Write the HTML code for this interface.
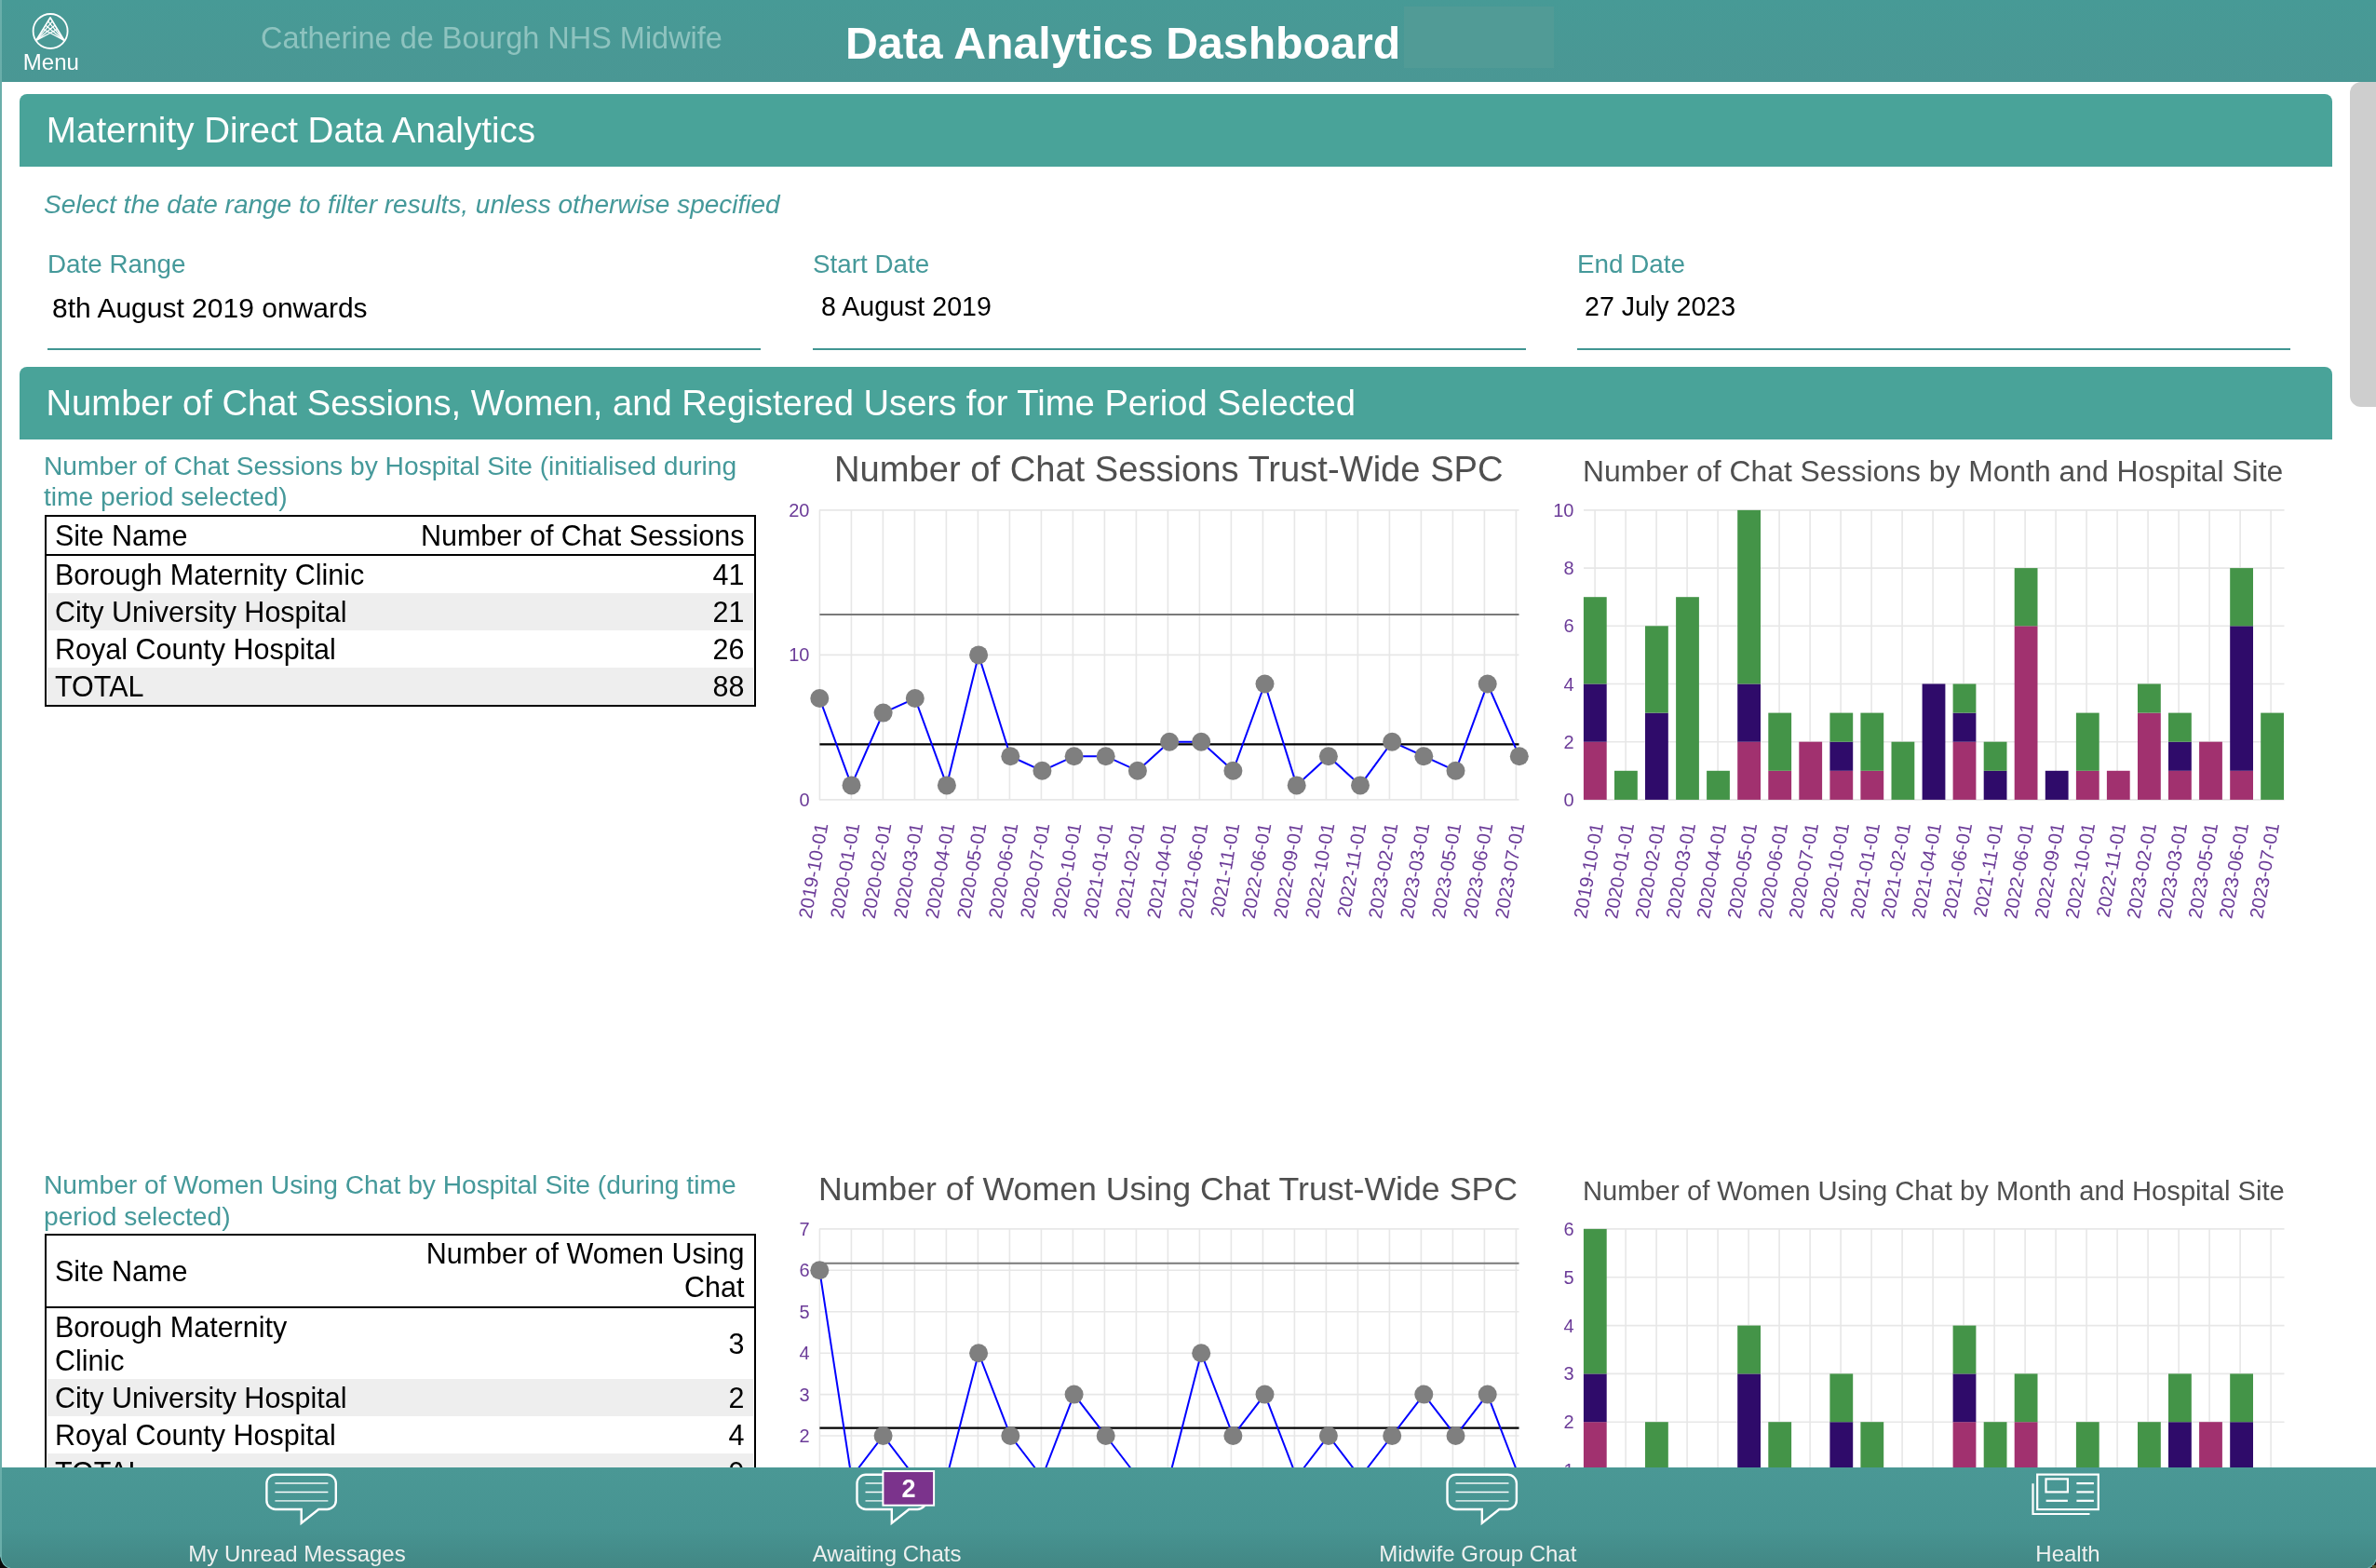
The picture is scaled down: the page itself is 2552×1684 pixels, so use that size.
<!DOCTYPE html>
<html><head><meta charset="utf-8"><title>Data Analytics Dashboard</title>
<style>
html,body{margin:0;padding:0;}
body{width:2552px;height:1684px;overflow:hidden;position:relative;background:#fff;font-family:"Liberation Sans", sans-serif;}
.abs{position:absolute;}
</style></head><body>
<div style="position:absolute;left:0;top:0;width:2552px;height:1684px;overflow:hidden;will-change:transform;">
<div class="abs" style="left:0;top:0;width:2px;height:1684px;background:#6aaeaa;z-index:50"></div>
<div class="abs" style="left:0;top:0;width:2552px;height:88px;background:linear-gradient(#479a96,#4a9794);"></div>
<div class="abs" style="left:1508px;top:7px;width:161px;height:66px;background:#519b96;"></div>
<div style="position:absolute;left:280.0px;top:24.8px;font-size:32.45px;line-height:32.45px;color:#8ec3bf;font-weight:normal;font-style:normal;white-space:nowrap;">Catherine de Bourgh NHS Midwife</div>
<div style="position:absolute;left:908.0px;top:21.8px;font-size:48.25px;line-height:48.25px;color:#fff;font-weight:bold;font-style:normal;white-space:nowrap;">Data Analytics Dashboard</div>
<div style="position:absolute;left:24.8px;top:54.9px;font-size:24px;line-height:24px;color:#fff;font-weight:normal;font-style:normal;white-space:nowrap;">Menu</div>
<svg class="abs" style="left:30px;top:10px" width="50" height="50" viewBox="30 10 50 50"><circle cx="54.1" cy="33.5" r="18.5" fill="none" stroke="#fff" stroke-width="1.8"/><line x1="38.9" y1="43.4" x2="56.61" y2="22.53" stroke="#fff" stroke-width="1.25"/><line x1="68.9" y1="43.4" x2="51.39" y2="22.53" stroke="#fff" stroke-width="1.25"/><line x1="38.9" y1="43.4" x2="59.22" y2="26.96" stroke="#fff" stroke-width="1.25"/><line x1="68.9" y1="43.4" x2="48.78" y2="26.96" stroke="#fff" stroke-width="1.25"/><line x1="38.9" y1="43.4" x2="61.76" y2="31.28" stroke="#fff" stroke-width="1.25"/><line x1="68.9" y1="43.4" x2="46.24" y2="31.28" stroke="#fff" stroke-width="1.25"/><polyline points="38.9,43.4 54,18.9 68.9,43.4" fill="none" stroke="#fff" stroke-width="1.8" stroke-linejoin="round"/></svg>
<div class="abs" style="left:2524px;top:88px;width:40px;height:349px;background:#cecece;border-radius:12px;"></div>
<div class="abs" style="left:21px;top:101px;width:2484px;height:78px;background:#49a399;border-radius:8px 8px 0 0;"></div>
<div style="position:absolute;left:49.8px;top:120.9px;font-size:38.6px;line-height:38.6px;color:#fff;font-weight:normal;font-style:normal;white-space:nowrap;">Maternity Direct Data Analytics</div>
<div style="position:absolute;left:47.0px;top:206.3px;font-size:28px;line-height:28px;color:#45999a;font-weight:normal;font-style:italic;white-space:nowrap;">Select the date range to filter results, unless otherwise specified</div>
<div style="position:absolute;left:51.0px;top:269.9px;font-size:27.8px;line-height:27.8px;color:#45999a;font-weight:normal;font-style:normal;white-space:nowrap;">Date Range</div>
<div style="position:absolute;left:56.0px;top:315.7px;font-size:30px;line-height:30px;color:#000;font-weight:normal;font-style:normal;white-space:nowrap;">8th August 2019 onwards</div>
<div class="abs" style="left:51px;top:374px;width:766px;height:2px;background:#419592;"></div>
<div style="position:absolute;left:873.0px;top:269.9px;font-size:27.8px;line-height:27.8px;color:#45999a;font-weight:normal;font-style:normal;white-space:nowrap;">Start Date</div>
<div style="position:absolute;left:882.0px;top:314.8px;font-size:28.6px;line-height:28.6px;color:#000;font-weight:normal;font-style:normal;white-space:nowrap;">8 August 2019</div>
<div class="abs" style="left:873px;top:374px;width:766px;height:2px;background:#419592;"></div>
<div style="position:absolute;left:1694.0px;top:269.9px;font-size:27.8px;line-height:27.8px;color:#45999a;font-weight:normal;font-style:normal;white-space:nowrap;">End Date</div>
<div style="position:absolute;left:1702.0px;top:314.8px;font-size:28.6px;line-height:28.6px;color:#000;font-weight:normal;font-style:normal;white-space:nowrap;">27 July 2023</div>
<div class="abs" style="left:1694px;top:374px;width:766px;height:2px;background:#419592;"></div>
<div class="abs" style="left:21px;top:394px;width:2484px;height:78px;background:#49a399;border-radius:8px 8px 0 0;"></div>
<div style="position:absolute;left:49.5px;top:413.9px;font-size:38.2px;line-height:38.2px;color:#fff;font-weight:normal;font-style:normal;white-space:nowrap;">Number of Chat Sessions, Women, and Registered Users for Time Period Selected</div>
<div style="position:absolute;left:47.0px;top:485.7px;font-size:28.2px;line-height:28.2px;color:#45999a;font-weight:normal;font-style:normal;white-space:nowrap;">Number of Chat Sessions by Hospital Site (initialised during</div>
<div style="position:absolute;left:47.0px;top:519.1px;font-size:28.2px;line-height:28.2px;color:#45999a;font-weight:normal;font-style:normal;white-space:nowrap;">time period selected)</div>
<div class="abs" style="left:48px;top:553px;width:760px;height:202px;border:2px solid #000;"></div>
<div class="abs" style="left:48px;top:595px;width:764px;height:2px;background:#000;"></div>
<div style="position:absolute;left:59.0px;top:560.0px;font-size:30.5px;line-height:30.5px;color:#000;font-weight:normal;font-style:normal;white-space:nowrap;">Site Name</div>
<div style="position:absolute;right:1752.5px;text-align:right;top:560.0px;font-size:30.5px;line-height:30.5px;color:#000;font-weight:normal;font-style:normal;white-space:nowrap;">Number of Chat Sessions</div>
<div style="position:absolute;left:59.0px;top:602.1px;font-size:30.5px;line-height:30.5px;color:#000;font-weight:normal;font-style:normal;white-space:nowrap;">Borough Maternity Clinic</div>
<div style="position:absolute;right:1752.5px;text-align:right;top:602.1px;font-size:30.5px;line-height:30.5px;color:#000;font-weight:normal;font-style:normal;white-space:nowrap;">41</div>
<div class="abs" style="left:51px;top:637px;width:758px;height:40px;background:#eeeeee;"></div>
<div style="position:absolute;left:59.0px;top:642.1px;font-size:30.5px;line-height:30.5px;color:#000;font-weight:normal;font-style:normal;white-space:nowrap;">City University Hospital</div>
<div style="position:absolute;right:1752.5px;text-align:right;top:642.1px;font-size:30.5px;line-height:30.5px;color:#000;font-weight:normal;font-style:normal;white-space:nowrap;">21</div>
<div style="position:absolute;left:59.0px;top:682.1px;font-size:30.5px;line-height:30.5px;color:#000;font-weight:normal;font-style:normal;white-space:nowrap;">Royal County Hospital</div>
<div style="position:absolute;right:1752.5px;text-align:right;top:682.1px;font-size:30.5px;line-height:30.5px;color:#000;font-weight:normal;font-style:normal;white-space:nowrap;">26</div>
<div class="abs" style="left:51px;top:717px;width:758px;height:40px;background:#eeeeee;"></div>
<div style="position:absolute;left:59.0px;top:722.1px;font-size:30.5px;line-height:30.5px;color:#000;font-weight:normal;font-style:normal;white-space:nowrap;">TOTAL</div>
<div style="position:absolute;right:1752.5px;text-align:right;top:722.1px;font-size:30.5px;line-height:30.5px;color:#000;font-weight:normal;font-style:normal;white-space:nowrap;">88</div>
<div style="position:absolute;left:47.0px;top:1258.3px;font-size:28.2px;line-height:28.2px;color:#45999a;font-weight:normal;font-style:normal;white-space:nowrap;">Number of Women Using Chat by Hospital Site (during time</div>
<div style="position:absolute;left:47.0px;top:1291.9px;font-size:28.2px;line-height:28.2px;color:#45999a;font-weight:normal;font-style:normal;white-space:nowrap;">period selected)</div>
<div class="abs" style="left:48px;top:1325px;width:760px;height:274px;border:2px solid #000;"></div>
<div class="abs" style="left:48px;top:1403px;width:764px;height:2px;background:#000;"></div>
<div style="position:absolute;left:59.0px;top:1350.3px;font-size:30.5px;line-height:30.5px;color:#000;font-weight:normal;font-style:normal;white-space:nowrap;">Site Name</div>
<div style="position:absolute;right:1752.5px;text-align:right;top:1331.3px;font-size:30.5px;line-height:30.5px;color:#000;font-weight:normal;font-style:normal;white-space:nowrap;">Number of Women Using</div>
<div style="position:absolute;right:1752.5px;text-align:right;top:1367.3px;font-size:30.5px;line-height:30.5px;color:#000;font-weight:normal;font-style:normal;white-space:nowrap;">Chat</div>
<div style="position:absolute;left:59.0px;top:1410.1px;font-size:30.5px;line-height:30.5px;color:#000;font-weight:normal;font-style:normal;white-space:nowrap;">Borough Maternity</div>
<div style="position:absolute;left:59.0px;top:1446.1px;font-size:30.5px;line-height:30.5px;color:#000;font-weight:normal;font-style:normal;white-space:nowrap;">Clinic</div>
<div style="position:absolute;right:1752.5px;text-align:right;top:1428.1px;font-size:30.5px;line-height:30.5px;color:#000;font-weight:normal;font-style:normal;white-space:nowrap;">3</div>
<div class="abs" style="left:51px;top:1481px;width:758px;height:40px;background:#eeeeee;"></div>
<div style="position:absolute;left:59.0px;top:1486.1px;font-size:30.5px;line-height:30.5px;color:#000;font-weight:normal;font-style:normal;white-space:nowrap;">City University Hospital</div>
<div style="position:absolute;right:1752.5px;text-align:right;top:1486.1px;font-size:30.5px;line-height:30.5px;color:#000;font-weight:normal;font-style:normal;white-space:nowrap;">2</div>
<div style="position:absolute;left:59.0px;top:1526.1px;font-size:30.5px;line-height:30.5px;color:#000;font-weight:normal;font-style:normal;white-space:nowrap;">Royal County Hospital</div>
<div style="position:absolute;right:1752.5px;text-align:right;top:1526.1px;font-size:30.5px;line-height:30.5px;color:#000;font-weight:normal;font-style:normal;white-space:nowrap;">4</div>
<div class="abs" style="left:51px;top:1561px;width:758px;height:40px;background:#eeeeee;"></div>
<div style="position:absolute;left:59.0px;top:1566.1px;font-size:30.5px;line-height:30.5px;color:#000;font-weight:normal;font-style:normal;white-space:nowrap;">TOTAL</div>
<div style="position:absolute;right:1752.5px;text-align:right;top:1566.1px;font-size:30.5px;line-height:30.5px;color:#000;font-weight:normal;font-style:normal;white-space:nowrap;">9</div>
<svg class="abs" style="left:0;top:0;z-index:1" width="2552" height="1684" viewBox="0 0 2552 1684" font-family='"Liberation Sans", sans-serif'><line x1="880" y1="858.9" x2="1631.5" y2="858.9" stroke="#e7e7e7" stroke-width="1.6"/><line x1="880" y1="703.4" x2="1631.5" y2="703.4" stroke="#e7e7e7" stroke-width="1.6"/><line x1="880" y1="547.9" x2="1631.5" y2="547.9" stroke="#e7e7e7" stroke-width="1.6"/><line x1="880.4" y1="547.9" x2="880.4" y2="858.9" stroke="#e7e7e7" stroke-width="1.6"/><line x1="914.4" y1="547.9" x2="914.4" y2="858.9" stroke="#e7e7e7" stroke-width="1.6"/><line x1="948.4" y1="547.9" x2="948.4" y2="858.9" stroke="#e7e7e7" stroke-width="1.6"/><line x1="982.4" y1="547.9" x2="982.4" y2="858.9" stroke="#e7e7e7" stroke-width="1.6"/><line x1="1016.4" y1="547.9" x2="1016.4" y2="858.9" stroke="#e7e7e7" stroke-width="1.6"/><line x1="1050.4" y1="547.9" x2="1050.4" y2="858.9" stroke="#e7e7e7" stroke-width="1.6"/><line x1="1084.4" y1="547.9" x2="1084.4" y2="858.9" stroke="#e7e7e7" stroke-width="1.6"/><line x1="1118.4" y1="547.9" x2="1118.4" y2="858.9" stroke="#e7e7e7" stroke-width="1.6"/><line x1="1152.4" y1="547.9" x2="1152.4" y2="858.9" stroke="#e7e7e7" stroke-width="1.6"/><line x1="1186.4" y1="547.9" x2="1186.4" y2="858.9" stroke="#e7e7e7" stroke-width="1.6"/><line x1="1220.4" y1="547.9" x2="1220.4" y2="858.9" stroke="#e7e7e7" stroke-width="1.6"/><line x1="1254.4" y1="547.9" x2="1254.4" y2="858.9" stroke="#e7e7e7" stroke-width="1.6"/><line x1="1288.4" y1="547.9" x2="1288.4" y2="858.9" stroke="#e7e7e7" stroke-width="1.6"/><line x1="1322.4" y1="547.9" x2="1322.4" y2="858.9" stroke="#e7e7e7" stroke-width="1.6"/><line x1="1356.4" y1="547.9" x2="1356.4" y2="858.9" stroke="#e7e7e7" stroke-width="1.6"/><line x1="1390.4" y1="547.9" x2="1390.4" y2="858.9" stroke="#e7e7e7" stroke-width="1.6"/><line x1="1424.4" y1="547.9" x2="1424.4" y2="858.9" stroke="#e7e7e7" stroke-width="1.6"/><line x1="1458.4" y1="547.9" x2="1458.4" y2="858.9" stroke="#e7e7e7" stroke-width="1.6"/><line x1="1492.4" y1="547.9" x2="1492.4" y2="858.9" stroke="#e7e7e7" stroke-width="1.6"/><line x1="1526.4" y1="547.9" x2="1526.4" y2="858.9" stroke="#e7e7e7" stroke-width="1.6"/><line x1="1560.4" y1="547.9" x2="1560.4" y2="858.9" stroke="#e7e7e7" stroke-width="1.6"/><line x1="1594.4" y1="547.9" x2="1594.4" y2="858.9" stroke="#e7e7e7" stroke-width="1.6"/><line x1="1628.4" y1="547.9" x2="1628.4" y2="858.9" stroke="#e7e7e7" stroke-width="1.6"/><line x1="880.4" y1="660.0" x2="1631.5" y2="660.0" stroke="#7a7a7a" stroke-width="2"/><line x1="880.4" y1="799.4" x2="1631.5" y2="799.4" stroke="#000" stroke-width="2.2"/><polyline points="880.3,750.0 914.5,843.4 948.6,765.6 982.8,750.0 1016.9,843.4 1051.1,703.4 1085.3,812.2 1119.4,827.8 1153.6,812.2 1187.7,812.2 1221.9,827.8 1256.1,796.7 1290.2,796.7 1324.4,827.8 1358.5,734.5 1392.7,843.4 1426.9,812.2 1461.0,843.4 1495.2,796.7 1529.3,812.2 1563.5,827.8 1597.7,734.5 1631.8,812.2" fill="none" stroke="#0000ff" stroke-width="2"/><circle cx="880.3" cy="750.0" r="10" fill="#7f7f7f"/><circle cx="914.5" cy="843.4" r="10" fill="#7f7f7f"/><circle cx="948.6" cy="765.6" r="10" fill="#7f7f7f"/><circle cx="982.8" cy="750.0" r="10" fill="#7f7f7f"/><circle cx="1016.9" cy="843.4" r="10" fill="#7f7f7f"/><circle cx="1051.1" cy="703.4" r="10" fill="#7f7f7f"/><circle cx="1085.3" cy="812.2" r="10" fill="#7f7f7f"/><circle cx="1119.4" cy="827.8" r="10" fill="#7f7f7f"/><circle cx="1153.6" cy="812.2" r="10" fill="#7f7f7f"/><circle cx="1187.7" cy="812.2" r="10" fill="#7f7f7f"/><circle cx="1221.9" cy="827.8" r="10" fill="#7f7f7f"/><circle cx="1256.1" cy="796.7" r="10" fill="#7f7f7f"/><circle cx="1290.2" cy="796.7" r="10" fill="#7f7f7f"/><circle cx="1324.4" cy="827.8" r="10" fill="#7f7f7f"/><circle cx="1358.5" cy="734.5" r="10" fill="#7f7f7f"/><circle cx="1392.7" cy="843.4" r="10" fill="#7f7f7f"/><circle cx="1426.9" cy="812.2" r="10" fill="#7f7f7f"/><circle cx="1461.0" cy="843.4" r="10" fill="#7f7f7f"/><circle cx="1495.2" cy="796.7" r="10" fill="#7f7f7f"/><circle cx="1529.3" cy="812.2" r="10" fill="#7f7f7f"/><circle cx="1563.5" cy="827.8" r="10" fill="#7f7f7f"/><circle cx="1597.7" cy="734.5" r="10" fill="#7f7f7f"/><circle cx="1631.8" cy="812.2" r="10" fill="#7f7f7f"/><text x="869.5" y="865.9" text-anchor="end" font-size="20" fill="#6b3b98">0</text><text x="869.5" y="710.4" text-anchor="end" font-size="20" fill="#6b3b98">10</text><text x="869.5" y="554.9" text-anchor="end" font-size="20" fill="#6b3b98">20</text><text transform="translate(889.4,885.4) rotate(-80)" text-anchor="end" font-size="20.3" fill="#6b3b98">2019-10-01</text><text transform="translate(923.4,885.4) rotate(-80)" text-anchor="end" font-size="20.3" fill="#6b3b98">2020-01-01</text><text transform="translate(957.4,885.4) rotate(-80)" text-anchor="end" font-size="20.3" fill="#6b3b98">2020-02-01</text><text transform="translate(991.4,885.4) rotate(-80)" text-anchor="end" font-size="20.3" fill="#6b3b98">2020-03-01</text><text transform="translate(1025.4,885.4) rotate(-80)" text-anchor="end" font-size="20.3" fill="#6b3b98">2020-04-01</text><text transform="translate(1059.4,885.4) rotate(-80)" text-anchor="end" font-size="20.3" fill="#6b3b98">2020-05-01</text><text transform="translate(1093.4,885.4) rotate(-80)" text-anchor="end" font-size="20.3" fill="#6b3b98">2020-06-01</text><text transform="translate(1127.4,885.4) rotate(-80)" text-anchor="end" font-size="20.3" fill="#6b3b98">2020-07-01</text><text transform="translate(1161.4,885.4) rotate(-80)" text-anchor="end" font-size="20.3" fill="#6b3b98">2020-10-01</text><text transform="translate(1195.4,885.4) rotate(-80)" text-anchor="end" font-size="20.3" fill="#6b3b98">2021-01-01</text><text transform="translate(1229.4,885.4) rotate(-80)" text-anchor="end" font-size="20.3" fill="#6b3b98">2021-02-01</text><text transform="translate(1263.4,885.4) rotate(-80)" text-anchor="end" font-size="20.3" fill="#6b3b98">2021-04-01</text><text transform="translate(1297.4,885.4) rotate(-80)" text-anchor="end" font-size="20.3" fill="#6b3b98">2021-06-01</text><text transform="translate(1331.4,885.4) rotate(-80)" text-anchor="end" font-size="20.3" fill="#6b3b98">2021-11-01</text><text transform="translate(1365.4,885.4) rotate(-80)" text-anchor="end" font-size="20.3" fill="#6b3b98">2022-06-01</text><text transform="translate(1399.4,885.4) rotate(-80)" text-anchor="end" font-size="20.3" fill="#6b3b98">2022-09-01</text><text transform="translate(1433.4,885.4) rotate(-80)" text-anchor="end" font-size="20.3" fill="#6b3b98">2022-10-01</text><text transform="translate(1467.4,885.4) rotate(-80)" text-anchor="end" font-size="20.3" fill="#6b3b98">2022-11-01</text><text transform="translate(1501.4,885.4) rotate(-80)" text-anchor="end" font-size="20.3" fill="#6b3b98">2023-02-01</text><text transform="translate(1535.4,885.4) rotate(-80)" text-anchor="end" font-size="20.3" fill="#6b3b98">2023-03-01</text><text transform="translate(1569.4,885.4) rotate(-80)" text-anchor="end" font-size="20.3" fill="#6b3b98">2023-05-01</text><text transform="translate(1603.4,885.4) rotate(-80)" text-anchor="end" font-size="20.3" fill="#6b3b98">2023-06-01</text><text transform="translate(1637.4,885.4) rotate(-80)" text-anchor="end" font-size="20.3" fill="#6b3b98">2023-07-01</text><text x="896" y="516.6" font-size="38.15" fill="#4f4f4f">Number of Chat Sessions Trust-Wide SPC</text></svg>
<svg class="abs" style="left:0;top:0;z-index:1" width="2552" height="1684" viewBox="0 0 2552 1684" font-family='"Liberation Sans", sans-serif'><line x1="1701" y1="858.9" x2="2453.5" y2="858.9" stroke="#e7e7e7" stroke-width="1.6"/><line x1="1701" y1="796.7" x2="2453.5" y2="796.7" stroke="#e7e7e7" stroke-width="1.6"/><line x1="1701" y1="734.5" x2="2453.5" y2="734.5" stroke="#e7e7e7" stroke-width="1.6"/><line x1="1701" y1="672.3" x2="2453.5" y2="672.3" stroke="#e7e7e7" stroke-width="1.6"/><line x1="1701" y1="610.1" x2="2453.5" y2="610.1" stroke="#e7e7e7" stroke-width="1.6"/><line x1="1701" y1="547.9" x2="2453.5" y2="547.9" stroke="#e7e7e7" stroke-width="1.6"/><line x1="1713.1" y1="547.9" x2="1713.1" y2="858.9" stroke="#e7e7e7" stroke-width="1.6"/><line x1="1746.1" y1="547.9" x2="1746.1" y2="858.9" stroke="#e7e7e7" stroke-width="1.6"/><line x1="1779.1" y1="547.9" x2="1779.1" y2="858.9" stroke="#e7e7e7" stroke-width="1.6"/><line x1="1812.1" y1="547.9" x2="1812.1" y2="858.9" stroke="#e7e7e7" stroke-width="1.6"/><line x1="1845.1" y1="547.9" x2="1845.1" y2="858.9" stroke="#e7e7e7" stroke-width="1.6"/><line x1="1878.1" y1="547.9" x2="1878.1" y2="858.9" stroke="#e7e7e7" stroke-width="1.6"/><line x1="1911.1" y1="547.9" x2="1911.1" y2="858.9" stroke="#e7e7e7" stroke-width="1.6"/><line x1="1944.1" y1="547.9" x2="1944.1" y2="858.9" stroke="#e7e7e7" stroke-width="1.6"/><line x1="1977.1" y1="547.9" x2="1977.1" y2="858.9" stroke="#e7e7e7" stroke-width="1.6"/><line x1="2010.1" y1="547.9" x2="2010.1" y2="858.9" stroke="#e7e7e7" stroke-width="1.6"/><line x1="2043.1" y1="547.9" x2="2043.1" y2="858.9" stroke="#e7e7e7" stroke-width="1.6"/><line x1="2076.1" y1="547.9" x2="2076.1" y2="858.9" stroke="#e7e7e7" stroke-width="1.6"/><line x1="2109.1" y1="547.9" x2="2109.1" y2="858.9" stroke="#e7e7e7" stroke-width="1.6"/><line x1="2142.1" y1="547.9" x2="2142.1" y2="858.9" stroke="#e7e7e7" stroke-width="1.6"/><line x1="2175.1" y1="547.9" x2="2175.1" y2="858.9" stroke="#e7e7e7" stroke-width="1.6"/><line x1="2208.1" y1="547.9" x2="2208.1" y2="858.9" stroke="#e7e7e7" stroke-width="1.6"/><line x1="2241.1" y1="547.9" x2="2241.1" y2="858.9" stroke="#e7e7e7" stroke-width="1.6"/><line x1="2274.1" y1="547.9" x2="2274.1" y2="858.9" stroke="#e7e7e7" stroke-width="1.6"/><line x1="2307.1" y1="547.9" x2="2307.1" y2="858.9" stroke="#e7e7e7" stroke-width="1.6"/><line x1="2340.1" y1="547.9" x2="2340.1" y2="858.9" stroke="#e7e7e7" stroke-width="1.6"/><line x1="2373.1" y1="547.9" x2="2373.1" y2="858.9" stroke="#e7e7e7" stroke-width="1.6"/><line x1="2406.1" y1="547.9" x2="2406.1" y2="858.9" stroke="#e7e7e7" stroke-width="1.6"/><line x1="2439.1" y1="547.9" x2="2439.1" y2="858.9" stroke="#e7e7e7" stroke-width="1.6"/><rect x="1700.9" y="796.7" width="24.8" height="62.2" fill="#a1316f"/><rect x="1700.9" y="734.5" width="24.8" height="62.2" fill="#2f0b6a"/><rect x="1700.9" y="641.2" width="24.8" height="93.3" fill="#449448"/><rect x="1734.0" y="827.8" width="24.8" height="31.1" fill="#449448"/><rect x="1767.0" y="765.6" width="24.8" height="93.3" fill="#2f0b6a"/><rect x="1767.0" y="672.3" width="24.8" height="93.3" fill="#449448"/><rect x="1800.1" y="641.2" width="24.8" height="217.7" fill="#449448"/><rect x="1833.1" y="827.8" width="24.8" height="31.1" fill="#449448"/><rect x="1866.2" y="796.7" width="24.8" height="62.2" fill="#a1316f"/><rect x="1866.2" y="734.5" width="24.8" height="62.2" fill="#2f0b6a"/><rect x="1866.2" y="547.9" width="24.8" height="186.6" fill="#449448"/><rect x="1899.3" y="827.8" width="24.8" height="31.1" fill="#a1316f"/><rect x="1899.3" y="765.6" width="24.8" height="62.2" fill="#449448"/><rect x="1932.3" y="796.7" width="24.8" height="62.2" fill="#a1316f"/><rect x="1965.4" y="827.8" width="24.8" height="31.1" fill="#a1316f"/><rect x="1965.4" y="796.7" width="24.8" height="31.1" fill="#2f0b6a"/><rect x="1965.4" y="765.6" width="24.8" height="31.1" fill="#449448"/><rect x="1998.4" y="827.8" width="24.8" height="31.1" fill="#a1316f"/><rect x="1998.4" y="765.6" width="24.8" height="62.2" fill="#449448"/><rect x="2031.5" y="796.7" width="24.8" height="62.2" fill="#449448"/><rect x="2064.6" y="734.5" width="24.8" height="124.4" fill="#2f0b6a"/><rect x="2097.6" y="796.7" width="24.8" height="62.2" fill="#a1316f"/><rect x="2097.6" y="765.6" width="24.8" height="31.1" fill="#2f0b6a"/><rect x="2097.6" y="734.5" width="24.8" height="31.1" fill="#449448"/><rect x="2130.7" y="827.8" width="24.8" height="31.1" fill="#2f0b6a"/><rect x="2130.7" y="796.7" width="24.8" height="31.1" fill="#449448"/><rect x="2163.7" y="672.3" width="24.8" height="186.6" fill="#a1316f"/><rect x="2163.7" y="610.1" width="24.8" height="62.2" fill="#449448"/><rect x="2196.8" y="827.8" width="24.8" height="31.1" fill="#2f0b6a"/><rect x="2229.9" y="827.8" width="24.8" height="31.1" fill="#a1316f"/><rect x="2229.9" y="765.6" width="24.8" height="62.2" fill="#449448"/><rect x="2262.9" y="827.8" width="24.8" height="31.1" fill="#a1316f"/><rect x="2296.0" y="765.6" width="24.8" height="93.3" fill="#a1316f"/><rect x="2296.0" y="734.5" width="24.8" height="31.1" fill="#449448"/><rect x="2329.0" y="827.8" width="24.8" height="31.1" fill="#a1316f"/><rect x="2329.0" y="796.7" width="24.8" height="31.1" fill="#2f0b6a"/><rect x="2329.0" y="765.6" width="24.8" height="31.1" fill="#449448"/><rect x="2362.1" y="796.7" width="24.8" height="62.2" fill="#a1316f"/><rect x="2395.2" y="827.8" width="24.8" height="31.1" fill="#a1316f"/><rect x="2395.2" y="672.3" width="24.8" height="155.5" fill="#2f0b6a"/><rect x="2395.2" y="610.1" width="24.8" height="62.2" fill="#449448"/><rect x="2428.2" y="765.6" width="24.8" height="93.3" fill="#449448"/><text x="1690.5" y="865.9" text-anchor="end" font-size="20" fill="#6b3b98">0</text><text x="1690.5" y="803.7" text-anchor="end" font-size="20" fill="#6b3b98">2</text><text x="1690.5" y="741.5" text-anchor="end" font-size="20" fill="#6b3b98">4</text><text x="1690.5" y="679.3" text-anchor="end" font-size="20" fill="#6b3b98">6</text><text x="1690.5" y="617.1" text-anchor="end" font-size="20" fill="#6b3b98">8</text><text x="1690.5" y="554.9" text-anchor="end" font-size="20" fill="#6b3b98">10</text><text transform="translate(1722.1,885.4) rotate(-80)" text-anchor="end" font-size="20.3" fill="#6b3b98">2019-10-01</text><text transform="translate(1755.1,885.4) rotate(-80)" text-anchor="end" font-size="20.3" fill="#6b3b98">2020-01-01</text><text transform="translate(1788.1,885.4) rotate(-80)" text-anchor="end" font-size="20.3" fill="#6b3b98">2020-02-01</text><text transform="translate(1821.1,885.4) rotate(-80)" text-anchor="end" font-size="20.3" fill="#6b3b98">2020-03-01</text><text transform="translate(1854.1,885.4) rotate(-80)" text-anchor="end" font-size="20.3" fill="#6b3b98">2020-04-01</text><text transform="translate(1887.1,885.4) rotate(-80)" text-anchor="end" font-size="20.3" fill="#6b3b98">2020-05-01</text><text transform="translate(1920.1,885.4) rotate(-80)" text-anchor="end" font-size="20.3" fill="#6b3b98">2020-06-01</text><text transform="translate(1953.1,885.4) rotate(-80)" text-anchor="end" font-size="20.3" fill="#6b3b98">2020-07-01</text><text transform="translate(1986.1,885.4) rotate(-80)" text-anchor="end" font-size="20.3" fill="#6b3b98">2020-10-01</text><text transform="translate(2019.1,885.4) rotate(-80)" text-anchor="end" font-size="20.3" fill="#6b3b98">2021-01-01</text><text transform="translate(2052.1,885.4) rotate(-80)" text-anchor="end" font-size="20.3" fill="#6b3b98">2021-02-01</text><text transform="translate(2085.1,885.4) rotate(-80)" text-anchor="end" font-size="20.3" fill="#6b3b98">2021-04-01</text><text transform="translate(2118.1,885.4) rotate(-80)" text-anchor="end" font-size="20.3" fill="#6b3b98">2021-06-01</text><text transform="translate(2151.1,885.4) rotate(-80)" text-anchor="end" font-size="20.3" fill="#6b3b98">2021-11-01</text><text transform="translate(2184.1,885.4) rotate(-80)" text-anchor="end" font-size="20.3" fill="#6b3b98">2022-06-01</text><text transform="translate(2217.1,885.4) rotate(-80)" text-anchor="end" font-size="20.3" fill="#6b3b98">2022-09-01</text><text transform="translate(2250.1,885.4) rotate(-80)" text-anchor="end" font-size="20.3" fill="#6b3b98">2022-10-01</text><text transform="translate(2283.1,885.4) rotate(-80)" text-anchor="end" font-size="20.3" fill="#6b3b98">2022-11-01</text><text transform="translate(2316.1,885.4) rotate(-80)" text-anchor="end" font-size="20.3" fill="#6b3b98">2023-02-01</text><text transform="translate(2349.1,885.4) rotate(-80)" text-anchor="end" font-size="20.3" fill="#6b3b98">2023-03-01</text><text transform="translate(2382.1,885.4) rotate(-80)" text-anchor="end" font-size="20.3" fill="#6b3b98">2023-05-01</text><text transform="translate(2415.1,885.4) rotate(-80)" text-anchor="end" font-size="20.3" fill="#6b3b98">2023-06-01</text><text transform="translate(2448.1,885.4) rotate(-80)" text-anchor="end" font-size="20.3" fill="#6b3b98">2023-07-01</text><text x="1700" y="517.3" font-size="31.85" fill="#4f4f4f">Number of Chat Sessions by Month and Hospital Site</text></svg>
<svg class="abs" style="left:0;top:0;z-index:1" width="2552" height="1684" viewBox="0 0 2552 1684" font-family='"Liberation Sans", sans-serif'><line x1="880" y1="1630.9" x2="1631.5" y2="1630.9" stroke="#e7e7e7" stroke-width="1.6"/><line x1="880" y1="1586.5" x2="1631.5" y2="1586.5" stroke="#e7e7e7" stroke-width="1.6"/><line x1="880" y1="1542.0" x2="1631.5" y2="1542.0" stroke="#e7e7e7" stroke-width="1.6"/><line x1="880" y1="1497.6" x2="1631.5" y2="1497.6" stroke="#e7e7e7" stroke-width="1.6"/><line x1="880" y1="1453.2" x2="1631.5" y2="1453.2" stroke="#e7e7e7" stroke-width="1.6"/><line x1="880" y1="1408.8" x2="1631.5" y2="1408.8" stroke="#e7e7e7" stroke-width="1.6"/><line x1="880" y1="1364.3" x2="1631.5" y2="1364.3" stroke="#e7e7e7" stroke-width="1.6"/><line x1="880" y1="1319.9" x2="1631.5" y2="1319.9" stroke="#e7e7e7" stroke-width="1.6"/><line x1="880.4" y1="1319.9" x2="880.4" y2="1630.9" stroke="#e7e7e7" stroke-width="1.6"/><line x1="914.4" y1="1319.9" x2="914.4" y2="1630.9" stroke="#e7e7e7" stroke-width="1.6"/><line x1="948.4" y1="1319.9" x2="948.4" y2="1630.9" stroke="#e7e7e7" stroke-width="1.6"/><line x1="982.4" y1="1319.9" x2="982.4" y2="1630.9" stroke="#e7e7e7" stroke-width="1.6"/><line x1="1016.4" y1="1319.9" x2="1016.4" y2="1630.9" stroke="#e7e7e7" stroke-width="1.6"/><line x1="1050.4" y1="1319.9" x2="1050.4" y2="1630.9" stroke="#e7e7e7" stroke-width="1.6"/><line x1="1084.4" y1="1319.9" x2="1084.4" y2="1630.9" stroke="#e7e7e7" stroke-width="1.6"/><line x1="1118.4" y1="1319.9" x2="1118.4" y2="1630.9" stroke="#e7e7e7" stroke-width="1.6"/><line x1="1152.4" y1="1319.9" x2="1152.4" y2="1630.9" stroke="#e7e7e7" stroke-width="1.6"/><line x1="1186.4" y1="1319.9" x2="1186.4" y2="1630.9" stroke="#e7e7e7" stroke-width="1.6"/><line x1="1220.4" y1="1319.9" x2="1220.4" y2="1630.9" stroke="#e7e7e7" stroke-width="1.6"/><line x1="1254.4" y1="1319.9" x2="1254.4" y2="1630.9" stroke="#e7e7e7" stroke-width="1.6"/><line x1="1288.4" y1="1319.9" x2="1288.4" y2="1630.9" stroke="#e7e7e7" stroke-width="1.6"/><line x1="1322.4" y1="1319.9" x2="1322.4" y2="1630.9" stroke="#e7e7e7" stroke-width="1.6"/><line x1="1356.4" y1="1319.9" x2="1356.4" y2="1630.9" stroke="#e7e7e7" stroke-width="1.6"/><line x1="1390.4" y1="1319.9" x2="1390.4" y2="1630.9" stroke="#e7e7e7" stroke-width="1.6"/><line x1="1424.4" y1="1319.9" x2="1424.4" y2="1630.9" stroke="#e7e7e7" stroke-width="1.6"/><line x1="1458.4" y1="1319.9" x2="1458.4" y2="1630.9" stroke="#e7e7e7" stroke-width="1.6"/><line x1="1492.4" y1="1319.9" x2="1492.4" y2="1630.9" stroke="#e7e7e7" stroke-width="1.6"/><line x1="1526.4" y1="1319.9" x2="1526.4" y2="1630.9" stroke="#e7e7e7" stroke-width="1.6"/><line x1="1560.4" y1="1319.9" x2="1560.4" y2="1630.9" stroke="#e7e7e7" stroke-width="1.6"/><line x1="1594.4" y1="1319.9" x2="1594.4" y2="1630.9" stroke="#e7e7e7" stroke-width="1.6"/><line x1="1628.4" y1="1319.9" x2="1628.4" y2="1630.9" stroke="#e7e7e7" stroke-width="1.6"/><line x1="880.4" y1="1356.8" x2="1631.5" y2="1356.8" stroke="#7a7a7a" stroke-width="2"/><line x1="880.4" y1="1533.7" x2="1631.5" y2="1533.7" stroke="#000" stroke-width="2.2"/><polyline points="880.3,1364.3 914.5,1586.5 948.6,1542.0 982.8,1586.5 1016.9,1586.5 1051.1,1453.2 1085.3,1542.0 1119.4,1586.5 1153.6,1497.6 1187.7,1542.0 1221.9,1586.5 1256.1,1586.5 1290.2,1453.2 1324.4,1542.0 1358.5,1497.6 1392.7,1586.5 1426.9,1542.0 1461.0,1586.5 1495.2,1542.0 1529.3,1497.6 1563.5,1542.0 1597.7,1497.6 1631.8,1586.5" fill="none" stroke="#0000ff" stroke-width="2"/><circle cx="880.3" cy="1364.3" r="10" fill="#7f7f7f"/><circle cx="914.5" cy="1586.5" r="10" fill="#7f7f7f"/><circle cx="948.6" cy="1542.0" r="10" fill="#7f7f7f"/><circle cx="982.8" cy="1586.5" r="10" fill="#7f7f7f"/><circle cx="1016.9" cy="1586.5" r="10" fill="#7f7f7f"/><circle cx="1051.1" cy="1453.2" r="10" fill="#7f7f7f"/><circle cx="1085.3" cy="1542.0" r="10" fill="#7f7f7f"/><circle cx="1119.4" cy="1586.5" r="10" fill="#7f7f7f"/><circle cx="1153.6" cy="1497.6" r="10" fill="#7f7f7f"/><circle cx="1187.7" cy="1542.0" r="10" fill="#7f7f7f"/><circle cx="1221.9" cy="1586.5" r="10" fill="#7f7f7f"/><circle cx="1256.1" cy="1586.5" r="10" fill="#7f7f7f"/><circle cx="1290.2" cy="1453.2" r="10" fill="#7f7f7f"/><circle cx="1324.4" cy="1542.0" r="10" fill="#7f7f7f"/><circle cx="1358.5" cy="1497.6" r="10" fill="#7f7f7f"/><circle cx="1392.7" cy="1586.5" r="10" fill="#7f7f7f"/><circle cx="1426.9" cy="1542.0" r="10" fill="#7f7f7f"/><circle cx="1461.0" cy="1586.5" r="10" fill="#7f7f7f"/><circle cx="1495.2" cy="1542.0" r="10" fill="#7f7f7f"/><circle cx="1529.3" cy="1497.6" r="10" fill="#7f7f7f"/><circle cx="1563.5" cy="1542.0" r="10" fill="#7f7f7f"/><circle cx="1597.7" cy="1497.6" r="10" fill="#7f7f7f"/><circle cx="1631.8" cy="1586.5" r="10" fill="#7f7f7f"/><text x="869.5" y="1637.9" text-anchor="end" font-size="20" fill="#6b3b98">0</text><text x="869.5" y="1593.5" text-anchor="end" font-size="20" fill="#6b3b98">1</text><text x="869.5" y="1549.0" text-anchor="end" font-size="20" fill="#6b3b98">2</text><text x="869.5" y="1504.6" text-anchor="end" font-size="20" fill="#6b3b98">3</text><text x="869.5" y="1460.2" text-anchor="end" font-size="20" fill="#6b3b98">4</text><text x="869.5" y="1415.8" text-anchor="end" font-size="20" fill="#6b3b98">5</text><text x="869.5" y="1371.3" text-anchor="end" font-size="20" fill="#6b3b98">6</text><text x="869.5" y="1326.9" text-anchor="end" font-size="20" fill="#6b3b98">7</text><text x="879" y="1288.6" font-size="35.7" fill="#4f4f4f">Number of Women Using Chat Trust-Wide SPC</text></svg>
<svg class="abs" style="left:0;top:0;z-index:1" width="2552" height="1684" viewBox="0 0 2552 1684" font-family='"Liberation Sans", sans-serif'><line x1="1701" y1="1630.9" x2="2453.5" y2="1630.9" stroke="#e7e7e7" stroke-width="1.6"/><line x1="1701" y1="1579.1" x2="2453.5" y2="1579.1" stroke="#e7e7e7" stroke-width="1.6"/><line x1="1701" y1="1527.2" x2="2453.5" y2="1527.2" stroke="#e7e7e7" stroke-width="1.6"/><line x1="1701" y1="1475.4" x2="2453.5" y2="1475.4" stroke="#e7e7e7" stroke-width="1.6"/><line x1="1701" y1="1423.6" x2="2453.5" y2="1423.6" stroke="#e7e7e7" stroke-width="1.6"/><line x1="1701" y1="1371.7" x2="2453.5" y2="1371.7" stroke="#e7e7e7" stroke-width="1.6"/><line x1="1701" y1="1319.9" x2="2453.5" y2="1319.9" stroke="#e7e7e7" stroke-width="1.6"/><line x1="1713.1" y1="1319.9" x2="1713.1" y2="1630.9" stroke="#e7e7e7" stroke-width="1.6"/><line x1="1746.1" y1="1319.9" x2="1746.1" y2="1630.9" stroke="#e7e7e7" stroke-width="1.6"/><line x1="1779.1" y1="1319.9" x2="1779.1" y2="1630.9" stroke="#e7e7e7" stroke-width="1.6"/><line x1="1812.1" y1="1319.9" x2="1812.1" y2="1630.9" stroke="#e7e7e7" stroke-width="1.6"/><line x1="1845.1" y1="1319.9" x2="1845.1" y2="1630.9" stroke="#e7e7e7" stroke-width="1.6"/><line x1="1878.1" y1="1319.9" x2="1878.1" y2="1630.9" stroke="#e7e7e7" stroke-width="1.6"/><line x1="1911.1" y1="1319.9" x2="1911.1" y2="1630.9" stroke="#e7e7e7" stroke-width="1.6"/><line x1="1944.1" y1="1319.9" x2="1944.1" y2="1630.9" stroke="#e7e7e7" stroke-width="1.6"/><line x1="1977.1" y1="1319.9" x2="1977.1" y2="1630.9" stroke="#e7e7e7" stroke-width="1.6"/><line x1="2010.1" y1="1319.9" x2="2010.1" y2="1630.9" stroke="#e7e7e7" stroke-width="1.6"/><line x1="2043.1" y1="1319.9" x2="2043.1" y2="1630.9" stroke="#e7e7e7" stroke-width="1.6"/><line x1="2076.1" y1="1319.9" x2="2076.1" y2="1630.9" stroke="#e7e7e7" stroke-width="1.6"/><line x1="2109.1" y1="1319.9" x2="2109.1" y2="1630.9" stroke="#e7e7e7" stroke-width="1.6"/><line x1="2142.1" y1="1319.9" x2="2142.1" y2="1630.9" stroke="#e7e7e7" stroke-width="1.6"/><line x1="2175.1" y1="1319.9" x2="2175.1" y2="1630.9" stroke="#e7e7e7" stroke-width="1.6"/><line x1="2208.1" y1="1319.9" x2="2208.1" y2="1630.9" stroke="#e7e7e7" stroke-width="1.6"/><line x1="2241.1" y1="1319.9" x2="2241.1" y2="1630.9" stroke="#e7e7e7" stroke-width="1.6"/><line x1="2274.1" y1="1319.9" x2="2274.1" y2="1630.9" stroke="#e7e7e7" stroke-width="1.6"/><line x1="2307.1" y1="1319.9" x2="2307.1" y2="1630.9" stroke="#e7e7e7" stroke-width="1.6"/><line x1="2340.1" y1="1319.9" x2="2340.1" y2="1630.9" stroke="#e7e7e7" stroke-width="1.6"/><line x1="2373.1" y1="1319.9" x2="2373.1" y2="1630.9" stroke="#e7e7e7" stroke-width="1.6"/><line x1="2406.1" y1="1319.9" x2="2406.1" y2="1630.9" stroke="#e7e7e7" stroke-width="1.6"/><line x1="2439.1" y1="1319.9" x2="2439.1" y2="1630.9" stroke="#e7e7e7" stroke-width="1.6"/><rect x="1700.9" y="1527.2" width="24.8" height="103.7" fill="#a1316f"/><rect x="1700.9" y="1475.4" width="24.8" height="51.8" fill="#2f0b6a"/><rect x="1700.9" y="1319.9" width="24.8" height="155.5" fill="#449448"/><rect x="1734.0" y="1579.1" width="24.8" height="51.8" fill="#449448"/><rect x="1767.0" y="1527.2" width="24.8" height="103.7" fill="#449448"/><rect x="1800.1" y="1579.1" width="24.8" height="51.8" fill="#449448"/><rect x="1833.1" y="1579.1" width="24.8" height="51.8" fill="#a1316f"/><rect x="1866.2" y="1475.4" width="24.8" height="155.5" fill="#2f0b6a"/><rect x="1866.2" y="1423.6" width="24.8" height="51.8" fill="#449448"/><rect x="1899.3" y="1527.2" width="24.8" height="103.7" fill="#449448"/><rect x="1932.3" y="1579.1" width="24.8" height="51.8" fill="#2f0b6a"/><rect x="1965.4" y="1527.2" width="24.8" height="103.7" fill="#2f0b6a"/><rect x="1965.4" y="1475.4" width="24.8" height="51.8" fill="#449448"/><rect x="1998.4" y="1527.2" width="24.8" height="103.7" fill="#449448"/><rect x="2031.5" y="1579.1" width="24.8" height="51.8" fill="#a1316f"/><rect x="2064.6" y="1579.1" width="24.8" height="51.8" fill="#2f0b6a"/><rect x="2097.6" y="1527.2" width="24.8" height="103.7" fill="#a1316f"/><rect x="2097.6" y="1475.4" width="24.8" height="51.8" fill="#2f0b6a"/><rect x="2097.6" y="1423.6" width="24.8" height="51.8" fill="#449448"/><rect x="2130.7" y="1527.2" width="24.8" height="103.7" fill="#449448"/><rect x="2163.7" y="1527.2" width="24.8" height="103.7" fill="#a1316f"/><rect x="2163.7" y="1475.4" width="24.8" height="51.8" fill="#449448"/><rect x="2196.8" y="1579.1" width="24.8" height="51.8" fill="#2f0b6a"/><rect x="2229.9" y="1527.2" width="24.8" height="103.7" fill="#449448"/><rect x="2262.9" y="1579.1" width="24.8" height="51.8" fill="#a1316f"/><rect x="2296.0" y="1527.2" width="24.8" height="103.7" fill="#449448"/><rect x="2329.0" y="1527.2" width="24.8" height="103.7" fill="#2f0b6a"/><rect x="2329.0" y="1475.4" width="24.8" height="51.8" fill="#449448"/><rect x="2362.1" y="1527.2" width="24.8" height="103.7" fill="#a1316f"/><rect x="2395.2" y="1527.2" width="24.8" height="103.7" fill="#2f0b6a"/><rect x="2395.2" y="1475.4" width="24.8" height="51.8" fill="#449448"/><rect x="2428.2" y="1579.1" width="24.8" height="51.8" fill="#449448"/><text x="1690.5" y="1637.9" text-anchor="end" font-size="20" fill="#6b3b98">0</text><text x="1690.5" y="1586.1" text-anchor="end" font-size="20" fill="#6b3b98">1</text><text x="1690.5" y="1534.2" text-anchor="end" font-size="20" fill="#6b3b98">2</text><text x="1690.5" y="1482.4" text-anchor="end" font-size="20" fill="#6b3b98">3</text><text x="1690.5" y="1430.6" text-anchor="end" font-size="20" fill="#6b3b98">4</text><text x="1690.5" y="1378.7" text-anchor="end" font-size="20" fill="#6b3b98">5</text><text x="1690.5" y="1326.9" text-anchor="end" font-size="20" fill="#6b3b98">6</text><text x="1700" y="1289.3" font-size="29.2" fill="#4f4f4f">Number of Women Using Chat by Month and Hospital Site</text></svg>
<div class="abs" style="left:0;top:1576px;width:2552px;height:108px;background:linear-gradient(#4a9895 0%,#479492 60%,#428784 100%);z-index:10"></div>
<svg class="abs" style="left:0;top:0;z-index:11" width="2552" height="1684" viewBox="0 0 2552 1684"><path d="M295.9,1583.7 H351.29999999999995 A9.5,9.5 0 0 1 360.79999999999995,1593.2 V1611.5 A9.5,9.5 0 0 1 351.29999999999995,1621.0 H342.2 L323.7,1635.7 V1621.0 H295.9 A9.5,9.5 0 0 1 286.4,1611.5 V1593.2 A9.5,9.5 0 0 1 295.9,1583.7 Z" fill="none" stroke="#fff" stroke-width="2.4" stroke-linejoin="miter"/><line x1="295.4" y1="1593.0" x2="352.4" y2="1593.0" stroke="#fff" stroke-opacity="0.7" stroke-width="1.8"/><line x1="295.4" y1="1602.5" x2="352.4" y2="1602.5" stroke="#fff" stroke-opacity="1.0" stroke-width="1.3"/><line x1="295.4" y1="1611.9" x2="352.4" y2="1611.9" stroke="#fff" stroke-opacity="0.7" stroke-width="1.8"/><path d="M930.0,1583.7 H985.4 A9.5,9.5 0 0 1 994.9,1593.2 V1611.5 A9.5,9.5 0 0 1 985.4,1621.0 H976.3 L957.8,1635.7 V1621.0 H930.0 A9.5,9.5 0 0 1 920.5,1611.5 V1593.2 A9.5,9.5 0 0 1 930.0,1583.7 Z" fill="none" stroke="#fff" stroke-width="2.4" stroke-linejoin="miter"/><line x1="929.5" y1="1593.0" x2="986.5" y2="1593.0" stroke="#fff" stroke-opacity="0.7" stroke-width="1.8"/><line x1="929.5" y1="1602.5" x2="986.5" y2="1602.5" stroke="#fff" stroke-opacity="1.0" stroke-width="1.3"/><line x1="929.5" y1="1611.9" x2="986.5" y2="1611.9" stroke="#fff" stroke-opacity="0.7" stroke-width="1.8"/><path d="M1564.0,1583.7 H1619.4 A9.5,9.5 0 0 1 1628.9,1593.2 V1611.5 A9.5,9.5 0 0 1 1619.4,1621.0 H1610.3 L1591.8,1635.7 V1621.0 H1564.0 A9.5,9.5 0 0 1 1554.5,1611.5 V1593.2 A9.5,9.5 0 0 1 1564.0,1583.7 Z" fill="none" stroke="#fff" stroke-width="2.4" stroke-linejoin="miter"/><line x1="1563.5" y1="1593.0" x2="1620.5" y2="1593.0" stroke="#fff" stroke-opacity="0.7" stroke-width="1.8"/><line x1="1563.5" y1="1602.5" x2="1620.5" y2="1602.5" stroke="#fff" stroke-opacity="1.0" stroke-width="1.3"/><line x1="1563.5" y1="1611.9" x2="1620.5" y2="1611.9" stroke="#fff" stroke-opacity="0.7" stroke-width="1.8"/><rect x="948.4" y="1580" width="54.7" height="36.7" fill="#7b338c" stroke="#fff" stroke-width="2"/><text x="976" y="1608" text-anchor="middle" font-family='"Liberation Sans", sans-serif' font-weight="bold" font-size="27" fill="#fff">2</text><rect x="2188.2" y="1583.6" width="65.6" height="37.5" fill="none" stroke="#fff" stroke-width="2.2"/><polyline points="2183.5,1593.3 2183.5,1626 2244.5,1626" fill="none" stroke="#fff" stroke-width="2.2"/><rect x="2197.5" y="1588.4" width="23.4" height="14" fill="none" stroke="#fff" stroke-width="2.2"/><line x1="2230.4" y1="1593.1" x2="2248.9" y2="1593.1" stroke="#fff" stroke-width="2.2"/><line x1="2230.4" y1="1602.4" x2="2248.9" y2="1602.4" stroke="#fff" stroke-width="2.2"/><line x1="2230.4" y1="1611.8" x2="2248.9" y2="1611.8" stroke="#fff" stroke-width="2.2"/><line x1="2197.6" y1="1611.8" x2="2220.9" y2="1611.8" stroke="#fff" stroke-width="2.2"/></svg>
<div class="abs" style="left:119px;width:400px;text-align:center;top:1656.7px;font-size:24px;line-height:24px;color:#eef0ef;white-space:nowrap;z-index:12">My Unread Messages</div>
<div class="abs" style="left:752.6px;width:400px;text-align:center;top:1656.7px;font-size:24px;line-height:24px;color:#eef0ef;white-space:nowrap;z-index:12">Awaiting Chats</div>
<div class="abs" style="left:1387.3px;width:400px;text-align:center;top:1656.7px;font-size:24px;line-height:24px;color:#eef0ef;white-space:nowrap;z-index:12">Midwife Group Chat</div>
<div class="abs" style="left:2021px;width:400px;text-align:center;top:1656.7px;font-size:24px;line-height:24px;color:#eef0ef;white-space:nowrap;z-index:12">Health</div>
<svg class="abs" style="left:0;top:0;z-index:60" width="2552" height="1684" viewBox="0 0 2552 1684"><path d="M0,1667 Q1.5,1682.5 11,1684 L0,1684 Z" fill="#0a0a0a"/><path d="M0,1667 Q1.5,1682.5 11,1684" fill="none" stroke="#72b5b2" stroke-width="1.2"/><path d="M2552,1674.7 Q2550,1682.5 2543,1684 L2552,1684 Z" fill="#0a0a0a"/><path d="M2552,1674.7 Q2550,1682.5 2543,1684" fill="none" stroke="#6aabaa" stroke-width="1.2"/><rect x="2548" y="1681" width="4" height="3" fill="#554f2a"/></svg>
</div></body></html>
